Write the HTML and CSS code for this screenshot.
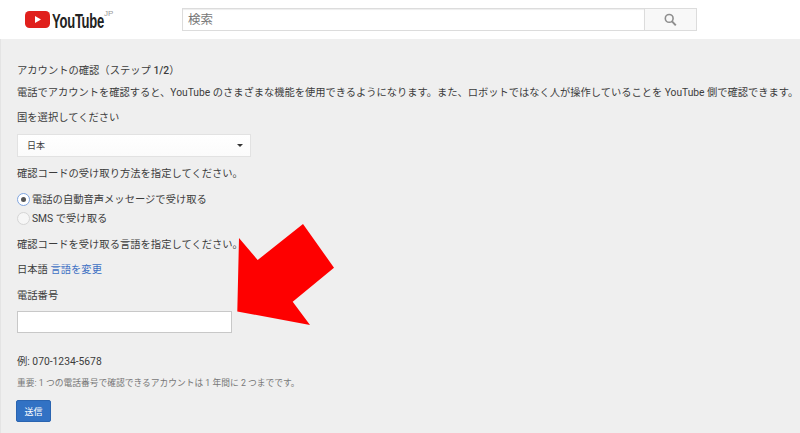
FILE: index.html
```html
<!DOCTYPE html>
<html lang="ja">
<head>
<meta charset="utf-8">
<title>アカウントの確認</title>
<link rel="stylesheet" href="styles.css">
</head>
<body>
<header class="masthead">
  <a class="logo">
    <svg class="logo-mark" width="25" height="17" viewBox="0 0 25 17"><rect width="25" height="17" rx="4.5" fill="#e0201c"/><path d="M10 5v7l6-3.5z" fill="#fff"/></svg>
    <span class="logo-text">YouTube</span>
    <span class="logo-jp">JP</span>
  </a>
  <div class="search">
    <div class="search-input">検索</div>
    <div class="search-btn">
      <svg width="13" height="14" viewBox="0 0 13 14"><circle cx="5.2" cy="5.4" r="3.9" fill="none" stroke="#8e8e8e" stroke-width="1.6"/><path d="M8 8.4l3.8 4" stroke="#8e8e8e" stroke-width="2" fill="none"/></svg>
    </div>
  </div>
</header>
<main class="content">
  <h1 class="title">アカウントの確認（ステップ <b>1/2</b>）</h1>
  <p class="intro">電話でアカウントを確認すると、YouTube のさまざまな機能を使用できるようになります。また、ロボットではなく人が操作していることを YouTube 側で確認できます。</p>
  <p class="label country-label">国を選択してください</p>
  <div class="select"><span>日本</span><i class="caret"></i></div>
  <p class="label method-label">確認コードの受け取り方法を指定してください。</p>
  <div class="radio-row first"><span class="radio on"></span>電話の自動音声メッセージで受け取る</div>
  <div class="radio-row"><span class="radio"></span>SMS で受け取る</div>
  <p class="label lang-label">確認コードを受け取る言語を指定してください。</p>
  <p class="label lang-value">日本語 <a class="link">言語を変更</a></p>
  <p class="label phone-label">電話番号</p>
  <div class="phone-input"></div>
  <p class="label example">例: 070-1234-5678</p>
  <p class="note">重要: 1 つの電話番号で確認できるアカウントは 1 年間に 2 つまでです。</p>
  <button class="submit">送信</button>
  <svg class="arrow" width="110" height="110" viewBox="230 220 110 110"><path d="M237.3 311.5L239 238L257.7 260L303 224L334 267.7L292.7 301.7L310 325Z" fill="#fe0000"/></svg>
</main>
</body>
</html>
```
FILE: styles.css
```css
* { box-sizing: border-box; }
html, body { margin: 0; padding: 0; }
body {
  width: 800px;
  height: 433px;
  overflow: hidden;
  background: #efefef;
  color: #3c3c3c;
  font-family: Roboto, "Noto Sans CJK JP", sans-serif;
  font-size: 10.3px;
}
.masthead {
  height: 39px;
  background: #fff;
  display: flex;
  align-items: flex-start;
}
.logo {
  width: 182px;
  flex: none;
  display: flex;
  align-items: flex-start;
  padding: 11px 0 0 25px;
}
.logo-text {
  display: block;
  width: 52px;
  margin-left: 2px;
  font-family: "Liberation Sans", sans-serif;
  font-size: 21px;
  line-height: 20px;
  font-weight: 700;
  color: #222;
  letter-spacing: -0.4px;
  transform: scaleX(0.62);
  transform-origin: left center;
  white-space: nowrap;
}
.logo-jp {
  font-family: "Liberation Sans", sans-serif;
  font-size: 8px;
  line-height: 8px;
  color: #999;
  margin-top: -1px;
}
.search {
  display: flex;
  margin-top: 8px;
  height: 23px;
}
.search-input {
  width: 463px;
  height: 23px;
  background: #fff;
  border: 1px solid #dcdcdc;
  color: #777;
  font-size: 12.5px;
  line-height: 21px;
  padding-left: 5px;
  box-shadow: inset 0 1px 1px #eee;
}
.search-btn {
  width: 52px;
  height: 23px;
  background: #f8f8f8;
  border: 1px solid #dcdcdc;
  border-left: 0;
  display: flex;
  align-items: center;
  justify-content: center;
}
.content {
  position: relative;
  height: 394px;
  padding-left: 16px;
  border-left: 1px solid #e4e4e4;
}
p, h1 { margin: 0; font-weight: 400; }
.title { font-size: 10.3px; line-height: 16px; padding-top: 24px; height: 38px; }
.title b { font-weight: 500; }
.intro { font-size: 10.25px; line-height: 16px; margin-top: 8px; white-space: nowrap; }
.label { line-height: 16px; white-space: nowrap; }
.country-label { margin-top: 9px; }
.select {
  width: 234px;
  height: 23px;
  margin-top: 8px;
  background: linear-gradient(#fff, #fbfbfb);
  border: 1px solid #e2e2e2;
  display: flex;
  align-items: center;
  justify-content: space-between;
  padding: 0 7px 0 9px;
  font-size: 9px;
}
.caret {
  width: 0;
  height: 0;
  border: 3px solid transparent;
  border-top: 3px solid #333;
  border-bottom: 0;
}
.method-label { margin-top: 9px; }
.radio-row {
  display: flex;
  align-items: center;
  gap: 2px;
  height: 19px;
  line-height: 19px;
  white-space: nowrap;
}
.radio-row.first { margin-top: 8px; }
.radio {
  width: 13px;
  height: 13px;
  border-radius: 50%;
  border: 1px solid #d5d5d5;
  background: #f6f6f6;
  display: flex;
  align-items: center;
  justify-content: center;
}
.radio.on { border-color: #7fa5e0; background: #fff; }
.radio.on::after {
  content: "";
  width: 5px;
  height: 5px;
  border-radius: 50%;
  background: #555;
}
.lang-label { margin-top: 9px; }
.lang-value { margin-top: 9px; }
.link { color: #3f72c4; }
.phone-label { margin-top: 10px; }
.phone-input {
  width: 215px;
  height: 22px;
  margin-top: 7px;
  background: #fff;
  border: 1px solid #c8c8c8;
}
.example { margin-top: 21px; }
.note { font-size: 8.75px; line-height: 14px; color: #777; margin-top: 6px; white-space: nowrap; }
.submit {
  display: block;
  width: 35px;
  height: 22px;
  margin-top: 10px;
  margin-left: -1px;
  padding: 0;
  background: #3272c4;
  border: 1px solid #2a64b0;
  border-radius: 2px;
  color: #fff;
  font-family: inherit;
  font-size: 9px;
}
.arrow { position: absolute; left: 229px; top: 181px; }
```
